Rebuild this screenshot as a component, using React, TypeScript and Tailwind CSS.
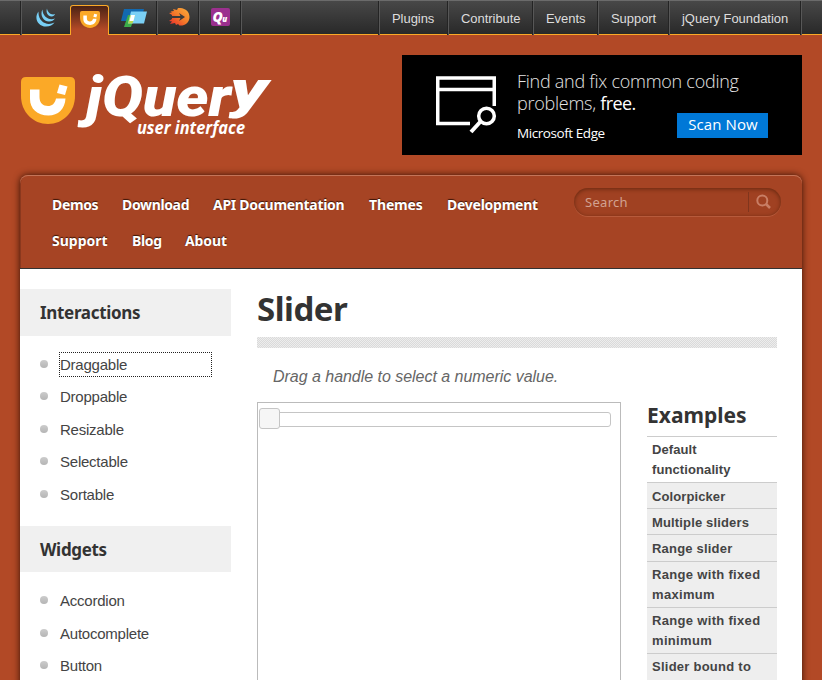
const display = "font-['Noto_Sans','Open_Sans',sans-serif] font-bold";

function UiMark({ className }: { className: string }) {
  return (
    <svg viewBox="0 0 54 47" className={className} preserveAspectRatio="none">
      <path d="M5 0H49Q54 0 54 5V19C54 35 42 47 27 47S0 35 0 19V5Q0 0 5 0Z" fill="#fba927" />
      <path d="M9 12.500H18.500V20C18.500 26 22 29 27 29C31 29 34 26.500 35 21.500H44.500C44 32 37 38.500 27.500 38.500C16 38.500 9 31.500 9 22Z" fill="#fff" />
      <path d="M38.500 7.500L46.500 9.500L44 18L36 16Z" fill="#fff" />
    </svg>
  );
}

function JqueryIcon() {
  return (
    <svg className="h-[19px] w-[20px]" viewBox="0 0 20 19" fill="#78cff5">
      <path d="M2.500 3.500C-2.500 10 2 18.500 10 18.500C14 18.500 16.500 17 18.500 14.500C11 18.500 2 14 2.500 3.500Z" />
      <path d="M6.500 1.500C3.500 7 7.500 13.500 13 13.500C16 13.500 17.500 12.500 19 10.500C13 13 6.500 8.500 6.500 1.500Z" />
      <path d="M11 .5C9.500 4.500 12 8.500 15.500 8.500C17.500 8.500 18.500 7.500 19 6C15.500 7.500 11.500 4.500 11 .5Z" />
    </svg>
  );
}

function MobileIcon() {
  return (
    <svg className="h-[19px] w-[26px]" viewBox="0 0 26 19">
      <path d="M3 0H23L20 12H0Z" fill="#1269b0" />
      <path d="M7 6H14L10 18H3Z" fill="#3cae49" />
      <path d="M10 2.500H26L23 14.500H7Z" fill="#7bd0f5" />
      <path d="M9.500 6H14L11.500 14.500H7Z" fill="#b8d84f" />
      <path d="M10 6H14L12.500 12H8.500Z" fill="#fff" />
    </svg>
  );
}

function SizzleIcon() {
  return (
    <svg className="h-[18px] w-[21px]" viewBox="0 0 21 18">
      <defs>
        <linearGradient id="flame" x1="1" y1="0" x2="0" y2="1">
          <stop offset="0" stopColor="#fbb03b" />
          <stop offset=".5" stopColor="#f47b2a" />
          <stop offset="1" stopColor="#e9232c" />
        </linearGradient>
      </defs>
      <path d="M0 5L3 4.500L1.500 3.500L5 3L4 1L8 2L9 0C16 -.5 20.500 3.500 20.500 9C20.500 14.500 16 18 10.500 17.500L9 16L7 17L6 15L1 16L3 13.500L0 13L3 11V7Z" fill="url(#flame)" />
      <path d="M0 8H11.500L10 5L16 9L10 13L11.500 10H1L3 9.500Z" fill="#3a3a3a" />
    </svg>
  );
}

function SiteLogo() {
  return (
    <div className="mt-[40px] ml-[21px] flex w-[260px]">
      <UiMark className="mt-[2px] h-[47px] w-[54px] shrink-0" />
      <svg className="h-[70px] w-[202px] overflow-visible" viewBox="75 75 202 70" fill="#fff" fontStyle="italic">
        <g fontFamily="Roboto, 'Open Sans', sans-serif" fontWeight="900">
          <text x="86" y="116" fontSize="55" textLength="145" lengthAdjust="spacingAndGlyphs">
            jQuer
          </text>
          <text x="230" y="107" fontSize="52" textLength="38" lengthAdjust="spacingAndGlyphs">
            y
          </text>
        </g>
        <text x="137" y="134" fontFamily="'Open Sans', 'Noto Sans', sans-serif" fontSize="17" fontWeight="700" textLength="108" lengthAdjust="spacingAndGlyphs">
          user interface
        </text>
      </svg>
    </div>
  );
}

function Banner() {
  return (
    <div className="mt-5 flex h-[100px] w-[400px] bg-black text-white font-['Open_Sans','Noto_Sans',sans-serif]">
      <svg className="mt-[21px] ml-[34px] h-[58px] w-[61px] shrink-0" viewBox="0 0 61 58" fill="none" stroke="#fff" strokeWidth="3.500">
        <path d="M34 47.500H1.750V2H58.250V30M1.750 13.500H58.250" />
        <circle cx="50.500" cy="40" r="7.800" />
        <path d="M45 45L35 56" strokeWidth="4" />
      </svg>
      <div className="mt-[15px] ml-[20px] w-[160px]">
        <div className="w-[230px] text-[18px] leading-[22px] font-light tracking-[-0.260px] whitespace-nowrap text-[#e4e4e4]">
          <div>Find and fix common coding</div>
          <div>problems, <span className="font-medium tracking-[-0.600px] text-white">free.</span></div>
        </div>
        <div className="mt-[9px] text-[13.500px] leading-[20px] font-medium tracking-[-0.430px]">Microsoft Edge</div>
      </div>
      <div className="mt-[58px] h-[25px] w-[91px] bg-[#0078d7] pl-px text-center text-[15px] leading-[23px] tracking-[0.100px] whitespace-nowrap">Scan Now</div>
    </div>
  );
}

const barItem = "h-[34px] shrink-0 border-l border-[#575757] shadow-[-1px_0_0_#242424]";
const barLink = barItem + " pt-[10px] pl-3 text-[13px] leading-4 tracking-[-0.050px] text-[#ddd] whitespace-nowrap";

function TopBar() {
  return (
    <div className="flex h-[35px] border-t border-b border-t-[#6b6b6b] border-b-[#fba927] bg-linear-to-b from-[#484848] to-[#292929]">
      <div className={barItem + " ml-[21px] w-[49px] pt-[7px] pl-[14px]"}><JqueryIcon /></div>
      <div className="mt-1 flex h-[30px] w-[39px] justify-center rounded-t-[3px] border border-b-0 border-[#fba927] bg-linear-to-b from-[#4c2314] to-[#b24926] to-80% pt-[5px]">
        <UiMark className="h-[17px] w-[20px]" />
      </div>
      <div className="w-[48px] pt-[8px] pl-[12px]"><MobileIcon /></div>
      <div className={barItem + " w-[42px] pt-[7px] pl-[11px]"}><SizzleIcon /></div>
      <div className={barItem + " w-[42px] pt-[7px] pl-[11px]"}>
        <div className="h-[18px] w-[19px] rounded-[2px] bg-[#9b308e] pl-[1.500px] font-['Open_Sans',sans-serif] text-[14px] leading-[17px] font-extrabold tracking-[-0.500px] text-white italic">
          Q<span className="text-[8px]">u</span>
        </div>
      </div>
      <div className={barItem + " w-[138px]"} />
      <div className={barLink + " w-[69px]"}>Plugins</div>
      <div className={barLink + " w-[85px]"}>Contribute</div>
      <div className={barLink + " w-[65px]"}>Events</div>
      <div className={barLink + " w-[71px]"}>Support</div>
      <div className={barLink + " w-[132px]"}>jQuery Foundation</div>
      <div className={barItem + " w-5"} />
    </div>
  );
}

function MainNav() {
  const link = "block h-9 leading-9";
  return (
    <nav className="flex h-[94px] justify-between rounded-t-[8px] border-b border-[#333] bg-[#a64424] pl-[32px] shadow-[inset_0_1px_0_#c47458,inset_1px_0_0_#8a381e]">
      <div className={display + " flex w-[510px] flex-wrap content-start pt-[12px] text-[14px] tracking-[-0.350px] whitespace-nowrap text-white [text-shadow:0_-1px_1px_#3b1508]"}>
        <a className={link + " w-[70px]"}>Demos</a>
        <a className={link + " w-[91px]"}>Download</a>
        <a className={link + " w-[156px] tracking-[-0.300px]"}>API Documentation</a>
        <a className={link + " w-[78px] tracking-[-0.150px]"}>Themes</a>
        <a className={link + " w-[115px] tracking-[-0.250px]"}>Development</a>
        <a className={link + " w-[80px] tracking-normal"}>Support</a>
        <a className={link + " w-[53px]"}>Blog</a>
        <a className={link + " w-[60px] tracking-[-0.100px]"}>About</a>
      </div>
      <div className="mt-[13px] mr-[21px] flex h-[28px] w-[207px] items-center rounded-full bg-[#a04122] shadow-[inset_0_1px_4px_#64270f,0_1px_0_#b75a3b]">
        <span className="w-[174px] pl-[11px] font-['Noto_Sans',sans-serif] text-[13px] leading-5 tracking-[0.300px] text-[#d2a191]">Search</span>
        <span className="h-[20px] w-px bg-[#80351d]" />
        <svg className="ml-[7px] h-4 w-4" viewBox="0 0 16 16" fill="none" stroke="#c97e65">
          <circle cx="6.300" cy="6.500" r="5" strokeWidth="2" />
          <path d="M10 10L14 14" strokeWidth="2.500" />
        </svg>
      </div>
    </nav>
  );
}

function SideSection({ title, items, focused, className, listPad }: { title: string; items: string[]; focused?: string; className: string; listPad: string }) {
  return (
    <section className={className}>
      <h3 className={display + " bg-[#f0f0f0] pl-5 text-[17px] tracking-[-0.320px] text-[#333] " + (focused ? "h-[47px] leading-[48px]" : "h-[46px] leading-[48px]")}>{title}</h3>
      <ul className={"pl-[20px] " + listPad}>
        {items.map((item) => (
          <li key={item} className="flex h-[32.500px] items-start">
            <span className="mt-[8px] mr-[11px] size-2 rounded-full bg-linear-to-b from-[#ccc] to-[#b5b5b5]" />
            <span className={"h-[25px] w-[153px] border text-[15px] leading-[23px] tracking-[-0.230px] text-[#444] " + (item === focused ? "border-dotted border-[#222]" : "border-transparent")}>
              {item}
            </span>
          </li>
        ))}
      </ul>
    </section>
  );
}

const examples = [
  { lines: ["Default", "functionality"], box: "h-[46px] bg-white pt-[3px] tracking-[0.100px]" },
  { lines: ["Colorpicker"], box: "h-[26px] bg-[#eee] pt-[4px] tracking-[0.100px]" },
  { lines: ["Multiple sliders"], box: "h-[26px] bg-[#eee] pt-[4px] tracking-[0.150px]" },
  { lines: ["Range slider"], box: "h-[27px] bg-[#eee] pt-[4px] tracking-[0.200px]" },
  { lines: ["Range with fixed", "maximum"], box: "h-[46px] bg-[#eee] pt-[3px] tracking-[0.320px]" },
  { lines: ["Range with fixed", "minimum"], box: "h-[46px] bg-[#eee] pt-[3px] tracking-[0.320px]" },
  { lines: ["Slider bound to"], box: "h-[46px] bg-[#eee] pt-[3px] tracking-[0.250px]" },
];

export default function App() {
  return (
    <div className="h-[680px] w-[839px] overflow-hidden bg-white font-['Liberation_Sans',Arial,sans-serif]">
      <div className="h-[680px] w-[822px] overflow-hidden bg-[#b24926]">
        <TopBar />
        <header className="flex h-[140px] justify-between pr-5">
          <SiteLogo />
          <Banner />
        </header>
        <div className="mx-5 rounded-t-[8px] shadow-[0_0_7px_#351104]">
          <MainNav />
          <main className="flex h-[420px] bg-white">
            <aside className="w-[211px] pt-[20px]">
              <SideSection title="Interactions" items={["Draggable", "Droppable", "Resizable", "Selectable", "Sortable"]} focused="Draggable" className="h-[237px]" listPad="pt-[15.900px]" />
              <SideSection title="Widgets" items={["Accordion", "Autocomplete", "Button"]} className="h-[180px]" listPad="pt-[16.400px]" />
            </aside>
            <article className="ml-[26px] w-[520px]">
              <h1 className={display + " mt-[17px] h-[51px] text-[33px] leading-[46px] tracking-[-0.500px] text-[#333]"}>Slider</h1>
              <div className="h-[11px] bg-[#e2e2e2] bg-[repeating-conic-gradient(#dadada_0_25%,#ededed_0_50%)] bg-size-[2px_2px]" />
              <p className="mt-[19px] ml-4 text-[16px] leading-5 tracking-[-0.030px] text-[#666] italic">Drag a handle to select a numeric value.</p>
              <div className="mt-[15px] flex justify-between">
                <div className="h-[290px] w-[364px] border border-[#bbb] bg-white">
                  <div className="mt-[9px] ml-[11px] flex h-[15px] w-[342px] items-start rounded-[3px] border border-[#c5c5c5]">
                    <div className="-mt-[5px] -ml-[11px] size-[21px] shrink-0 rounded-[3px] border border-[#c5c5c5] bg-[#f6f6f6]" />
                  </div>
                </div>
                <div className="w-[130px]">
                  <h2 className={display + " h-[34px] text-[21px] leading-[26px] text-[#333]"}>Examples</h2>
                  {examples.map((e) => (
                    <div key={e.lines.join()} className={"border-t border-[#ccc] pl-[5px] text-[13px] leading-5 font-bold whitespace-nowrap text-[#444] " + e.box}>
                      {e.lines.map((l) => (
                        <div key={l}>{l}</div>
                      ))}
                    </div>
                  ))}
                </div>
              </div>
            </article>
          </main>
        </div>
      </div>
    </div>
  );
}
